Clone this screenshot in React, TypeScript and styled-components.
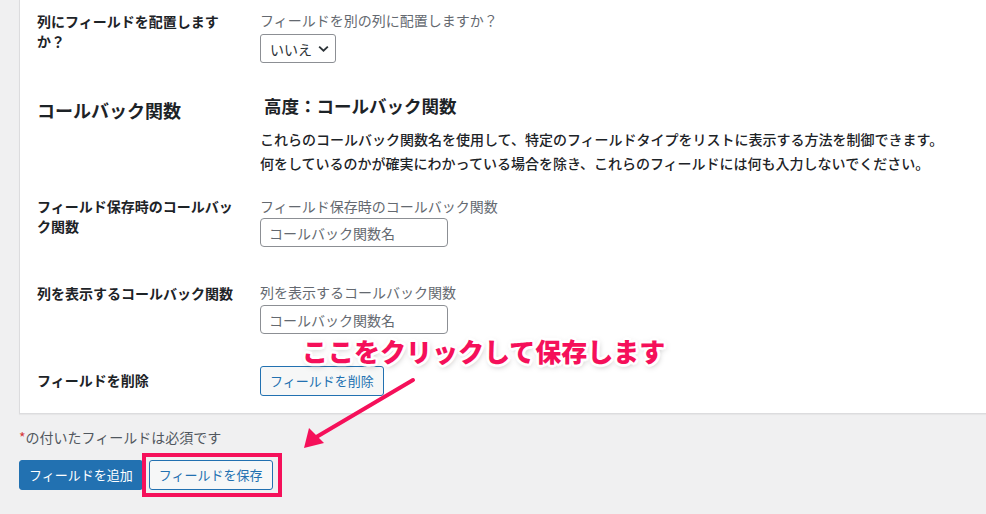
import styled, { createGlobalStyle } from 'styled-components';

const GlobalStyle = createGlobalStyle`
  html, body {
    margin: 0;
    padding: 0;
    background: #f0f0f1;
    overflow: hidden;
  }
  body {
    font-family: "Noto Sans CJK JP", "Noto Sans", sans-serif;
    color: #1d2327;
    font-size: 14px;
  }
`;

const Page = styled.div`
  position: relative;
  width: 986px;
  height: 514px;
  padding-left: 19px;
  box-sizing: border-box;
`;

const Panel = styled.div`
  background: #fff;
  border: 1px solid #dcdcde;
  border-top: none;
  border-right: none;
  box-shadow: 0 1px 1px rgba(0, 0, 0, 0.04);
  padding: 0 0 17px 17px;
`;

const Row = styled.div<{ $top: number }>`
  display: grid;
  grid-template-columns: 200px 1fr;
  column-gap: 23px;
  padding-top: ${p => p.$top}px;
`;

const Label = styled.div<{ $offset?: number }>`
  font-weight: 700;
  font-size: 14px;
  line-height: 19.5px;
  margin-top: ${p => p.$offset ?? 0}px;
`;

const SectionTitle = styled.h2`
  margin: 4px 0 0;
  font-size: 18px;
  line-height: 26px;
  font-weight: 700;
`;

const SubTitle = styled.h3`
  margin: 0 0 0 4px;
  font-size: 17.5px;
  line-height: 26px;
  font-weight: 700;
`;

const Para = styled.p<{ $first?: boolean }>`
  margin: ${p => (p.$first ? '8px' : '0')} 0 0;
  font-size: 14px;
  line-height: 24px;
  font-weight: 500;
  white-space: nowrap;
`;

const Field = styled.div`
  display: flex;
  flex-direction: column;
  align-items: flex-start;
`;

const Desc = styled.div`
  color: #646970;
  font-size: 14px;
  line-height: 20px;
`;

const SelectBox = styled.div`
  margin-top: 4px;
  display: inline-flex;
  align-items: center;
  gap: 5px;
  height: 29px;
  box-sizing: border-box;
  padding: 0 5px 0 9px;
  border: 1px solid #8c8f94;
  border-radius: 3px;
  color: #2c3338;
  font-size: 14px;
  background: #fff;
`;

const TextInput = styled.input<{ $gap: number }>`
  margin-top: ${p => p.$gap}px;
  width: 188px;
  height: 29px;
  box-sizing: border-box;
  padding: 0 8px;
  border: 1px solid #8c8f94;
  border-radius: 4px;
  font-family: inherit;
  font-size: 14px;
  color: #2c3338;
  background: #fff;
  outline: none;
  &::placeholder {
    color: #646970;
  }
`;

const Button = styled.button<{ $primary?: boolean }>`
  height: 30px;
  box-sizing: border-box;
  padding: 0 9px;
  border-radius: 3px;
  font-family: inherit;
  font-size: 13px;
  line-height: 28px;
  cursor: pointer;
  white-space: nowrap;
  border: 1px solid #2271b1;
  background: ${p => (p.$primary ? '#2271b1' : '#f6f7f7')};
  color: ${p => (p.$primary ? '#fff' : '#2271b1')};
`;

const Note = styled.div`
  margin-top: 13px;
  color: #50575e;
  font-size: 14px;
  line-height: 20px;
`;

const Required = styled.span`
  color: #d63638;
`;

const Actions = styled.div`
  margin-top: 13px;
  display: flex;
  gap: 6px;
`;

const Highlight = styled.div`
  position: relative;
  &::after {
    content: '';
    position: absolute;
    top: -7px;
    bottom: -7px;
    left: -7px;
    right: -9px;
    border: 4px solid #f5105a;
    pointer-events: none;
  }
`;

const Callout = styled.div`
  position: absolute;
  left: 302px;
  top: 333px;
  font-size: 26px;
  line-height: 36px;
  font-weight: 900;
  color: #f5105a;
  white-space: nowrap;
  text-shadow:
    2px 0 0 #fff, -2px 0 0 #fff, 0 2px 0 #fff, 0 -2px 0 #fff,
    2px 2px 0 #fff, -2px -2px 0 #fff, 2px -2px 0 #fff, -2px 2px 0 #fff,
    3px 0 1px #fff, -3px 0 1px #fff, 0 3px 1px #fff, 0 -3px 1px #fff,
    1px 2px 6px rgba(0, 0, 0, 0.35);
`;

const ArrowSvg = styled.svg`
  position: absolute;
  left: 296px;
  top: 372px;
  overflow: visible;
`;

function Arrow() {
  return (
    <ArrowSvg width="124" height="82" viewBox="0 0 124 82">
      <line x1="117" y1="8" x2="17" y2="67" stroke="#f5105a" strokeWidth="4" strokeLinecap="round" />
      <polygon points="8,76 13,56 28,71" fill="#f5105a" />
    </ArrowSvg>
  );
}

function Chevron() {
  return (
    <svg width="13" height="13" viewBox="0 0 12 12">
      <path d="M2 4.2 L6 8 L10 4.2" fill="none" stroke="#2c3338" strokeWidth="1.7" />
    </svg>
  );
}

export default function App() {
  return (
    <>
      <GlobalStyle />
      <Page>
        <Panel>
          <Row $top={10}>
            <Label $offset={2}>列にフィールドを配置しますか？</Label>
            <Field>
              <Desc>フィールドを別の列に配置しますか？</Desc>
              <SelectBox>
                いいえ
                <Chevron />
              </SelectBox>
            </Field>
          </Row>

          <Row $top={30}>
            <SectionTitle>コールバック関数</SectionTitle>
            <Field>
              <SubTitle>高度：コールバック関数</SubTitle>
              <Para $first>
                これらのコールバック関数名を使用して、特定のフィールドタイプをリストに表示する方法を制御できます。
              </Para>
              <Para>
                何をしているのかが確実にわかっている場合を除き、これらのフィールドには何も入力しないでください。
              </Para>
            </Field>
          </Row>

          <Row $top={21}>
            <Label $offset={1}>フィールド保存時のコールバック関数</Label>
            <Field>
              <Desc>フィールド保存時のコールバック関数</Desc>
              <TextInput $gap={2} placeholder="コールバック関数名" />
            </Field>
          </Row>

          <Row $top={35}>
            <Label $offset={2}>列を表示するコールバック関数</Label>
            <Field>
              <Desc>列を表示するコールバック関数</Desc>
              <TextInput $gap={3} placeholder="コールバック関数名" />
            </Field>
          </Row>

          <Row $top={32}>
            <Label $offset={5}>フィールドを削除</Label>
            <Field>
              <Button>フィールドを削除</Button>
            </Field>
          </Row>
        </Panel>

        <Note>
          <Required>*</Required>の付いたフィールドは必須です
        </Note>

        <Actions>
          <Button $primary>フィールドを追加</Button>
          <Highlight>
            <Button>フィールドを保存</Button>
          </Highlight>
        </Actions>

        <Callout>ここをクリックして保存します</Callout>
        <Arrow />
      </Page>
    </>
  );
}
